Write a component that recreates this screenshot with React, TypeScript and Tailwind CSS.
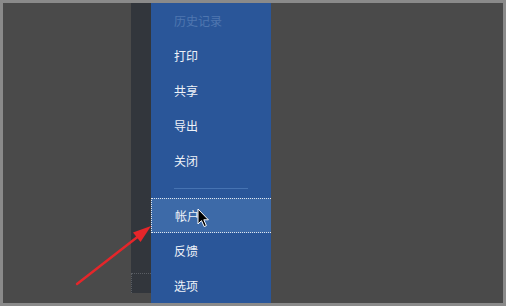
import React from 'react';

const topItems = [
  { label: '历史记录', disabled: true },
  { label: '打印' },
  { label: '共享' },
  { label: '导出' },
  { label: '关闭' },
];

const bottomItems = [
  { label: '帐户', active: true },
  { label: '反馈' },
  { label: '选项' },
];

const MenuItem = ({ label, disabled, active }: { label: string; disabled?: boolean; active?: boolean }) => (
  <div
    className={`h-[35px] flex items-center pl-[23px] text-[12px] ${
      disabled ? 'text-[#4f76b0]' : 'text-[#eef2f8]'
    } ${active ? 'bg-[#3d6aa8] border-y border-l border-dotted border-[#dfe6f0]' : ''}`}
  >
    {label}
  </div>
);

export default function App() {
  return (
    <div
      className="relative w-[506px] h-[306px] border-[3px] border-[#8a8a8a] bg-[#4a4a4a] flex overflow-hidden"
      style={{ fontFamily: '"Noto Sans CJK SC", "Noto Sans", sans-serif' }}
    >
      <div className="w-[128px] shrink-0" />

      {/* dark backstage strip */}
      <div className="w-[20px] h-[290px] shrink-0 bg-[#32363c] flex flex-col justify-end">
        <div className="h-[20px] border-t border-l border-dotted border-[#5a5e64]" />
      </div>

      {/* blue menu panel */}
      <div className="w-[120px] shrink-0 h-full bg-[#2a5699] flex flex-col">
        {topItems.map((item) => (
          <MenuItem key={item.label} {...item} />
        ))}
        <div className="h-[20px] pt-[10px] px-[23px]">
          <div className="h-px bg-[#4673b2]" />
        </div>
        {bottomItems.map((item) => (
          <MenuItem key={item.label} {...item} />
        ))}
      </div>

      {/* red annotation arrow */}
      <svg className="absolute left-[-3px] top-[-3px] pointer-events-none" width="506" height="306" viewBox="0 0 506 306">
        <line x1="77" y1="284" x2="140" y2="235" stroke="#e5262a" strokeWidth="2.4" strokeLinecap="round" />
        <polygon points="151,226 133,232.5 140.5,242" fill="#e5262a" />
      </svg>

      {/* mouse cursor */}
      <svg className="absolute left-[194px] top-[205px] pointer-events-none" width="14" height="21" viewBox="0 0 14 21">
        <path d="M1 1 L1 16 L4.5 12.6 L7.2 18.6 L9.4 17.6 L6.8 11.8 L11.4 11.8 Z" fill="#000" stroke="#fff" strokeWidth="1" strokeLinejoin="round" />
      </svg>
    </div>
  );
}
